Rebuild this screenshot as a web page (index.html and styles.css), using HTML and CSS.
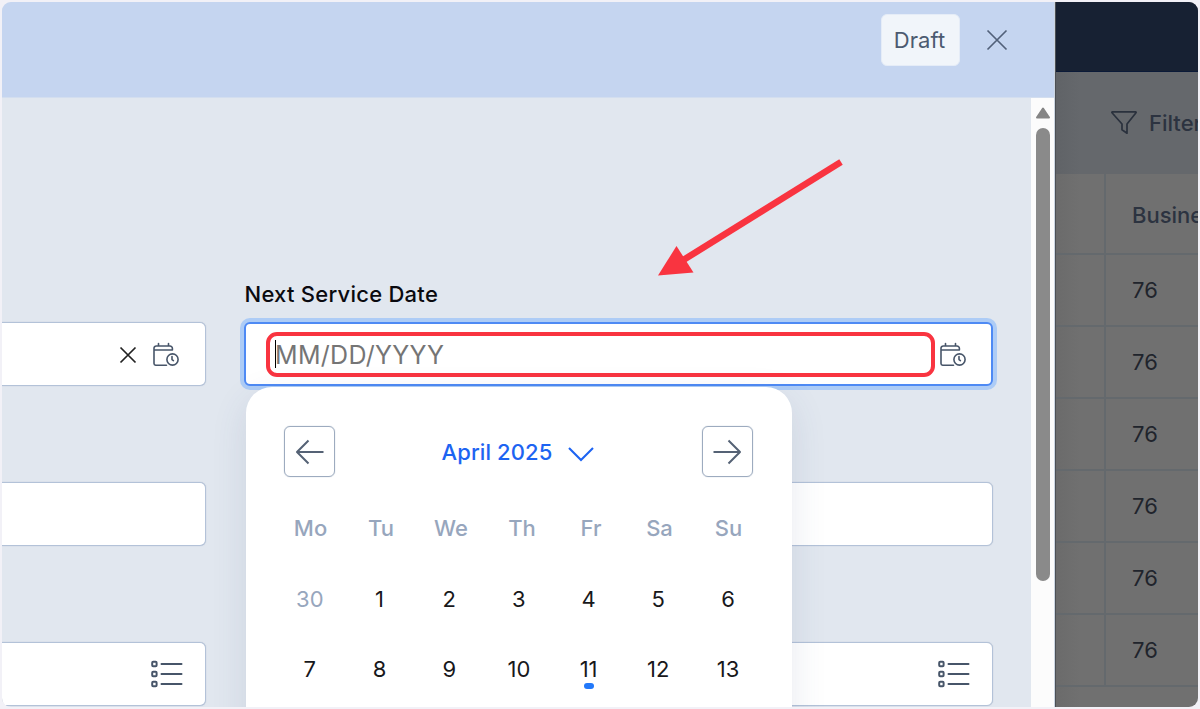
FILE: index.html
```html
<!DOCTYPE html>
<html lang="en">
<head>
<meta charset="utf-8">
<title>Next Service Date</title>
<link rel="stylesheet" href="styles.css">
</head>
<body>
<svg class="defs" width="0" height="0" aria-hidden="true">
  <symbol id="calendar-clock" viewBox="0 0 28 26">
    <g fill="none" stroke="#475569" stroke-width="1.6" stroke-linecap="round" stroke-linejoin="round">
      <path d="M14.5 23.2H3.600a1.600 1.600 0 0 1-1.600-1.600V6.2A2.2 2.2 0 0 1 4.2 4H18a2.4 2.4 0 0 1 2.4 2.4V8H2M6.500 1.500V4M16.500 1.500V4"/>
      <circle cx="20.500" cy="17.500" r="5.600"/>
      <path d="M20 14.500V17.600l1.400 1"/>
    </g>
  </symbol>
  <symbol id="list" viewBox="0 0 32 28">
    <g fill="none" stroke="#475569" stroke-width="2">
      <rect x="1.200" y="1.800" width="4.400" height="4.400" rx="1"/>
      <rect x="1.200" y="11.800" width="4.400" height="4.400" rx="1"/>
      <rect x="1.200" y="21.800" width="4.400" height="4.400" rx="1"/>
      <path stroke-linecap="round" d="M10.500 4H30.500M10.500 14H30.500M10.500 24H30.500"/>
    </g>
  </symbol>
</svg>
<div class="frame">
  <section class="drawer">
    <header class="drawer-head">
      <span class="draft">Draft</span>
      <svg class="close" width="22" height="22" viewBox="0 0 22 22"><path d="M1.500 1.500L20.500 20.500M20.500 1.500L1.500 20.500" fill="none" stroke="#52617a" stroke-width="1.700"/></svg>
    </header>
    <div class="drawer-body">
      <div class="form">
        <div class="col col-left">
          <div class="field date-field">
            <svg class="clear" width="18" height="18" viewBox="0 0 18 18"><path d="M1.500 1.500L16.500 16.500M16.500 1.500L1.500 16.500" fill="none" stroke="#222" stroke-width="1.700"/></svg>
            <svg class="cal-icon" width="28" height="26"><use href="#calendar-clock"/></svg>
          </div>
          <div class="field"></div>
          <div class="field list-field"><svg width="32" height="28"><use href="#list"/></svg></div>
        </div>
        <div class="col col-right">
          <label class="label">Next Service Date</label>
          <div class="field focused">
            <div class="highlight"><span class="caret"></span><span class="placeholder">MM/DD/YYYY</span></div>
            <svg class="cal-icon" width="28" height="26"><use href="#calendar-clock"/></svg>
          </div>
          <div class="field covered"></div>
          <div class="field covered list-field"><svg width="32" height="28"><use href="#list"/></svg></div>
          <div class="picker">
            <div class="picker-head">
              <span class="nav-btn"><svg width="30" height="26" viewBox="0 0 30 26"><path d="M28.500 13H2M13.500 1.500L2 13l11.500 11.500" fill="none" stroke="#556275" stroke-width="2" stroke-linejoin="round"/></svg></span>
              <span class="month">April 2025<svg width="28" height="16" viewBox="0 0 28 16"><path d="M2 2L14 14L26 2" fill="none" stroke="#1d64f2" stroke-width="2.100"/></svg></span>
              <span class="nav-btn"><svg width="30" height="26" viewBox="0 0 30 26"><path d="M1.500 13H28M16.500 1.500L28 13L16.500 24.500" fill="none" stroke="#556275" stroke-width="2" stroke-linejoin="round"/></svg></span>
            </div>
            <div class="weekdays"><span>Mo</span><span>Tu</span><span>We</span><span>Th</span><span>Fr</span><span>Sa</span><span>Su</span></div>
            <div class="days">
              <span class="muted">30</span><span>1</span><span>2</span><span>3</span><span>4</span><span>5</span><span>6</span>
              <span>7</span><span>8</span><span>9</span><span>10</span><span class="today">11</span><span>12</span><span>13</span>
            </div>
          </div>
        </div>
      </div>
      <div class="scrollbar">
        <svg width="16" height="12" viewBox="0 0 16 12"><path d="M8 1.500L14 10.500H2Z" fill="#858585" stroke="#858585" stroke-width="2" stroke-linejoin="round"/></svg>
        <div class="thumb"></div>
      </div>
    </div>
  </section>
  <aside class="backdrop">
    <div class="topbar"></div>
    <div class="toolbar">
      <svg width="28" height="26" viewBox="0 0 28 26"><path d="M2.500 1.800H25.500a.6.6 0 0 1 .5 1L17 14v9.200l-5-3.400V14L2 2.800a.6.6 0 0 1 .5-1Z" fill="none" stroke="#2a313d" stroke-width="1.700" stroke-linejoin="round"/></svg>
      <span>Filter</span>
    </div>
    <div class="table">
      <div class="row head"><span class="spacer"></span><span class="cell">Busine</span></div>
      <div class="row"><span class="spacer"></span><span class="cell">76</span></div>
      <div class="row"><span class="spacer"></span><span class="cell">76</span></div>
      <div class="row"><span class="spacer"></span><span class="cell">76</span></div>
      <div class="row"><span class="spacer"></span><span class="cell">76</span></div>
      <div class="row"><span class="spacer"></span><span class="cell">76</span></div>
      <div class="row"><span class="spacer"></span><span class="cell">76</span></div>
    </div>
  </aside>
  <svg class="arrow" width="190" height="122" viewBox="0 0 190 122"><path d="M185 6L22.500 107" fill="none" stroke="#f93440" stroke-width="6.600"/><path d="M2 119.500L20.500 90L37.500 116.500Z" fill="#f93440"/></svg>
</div>
</body>
</html>
```
FILE: styles.css
```css
* { box-sizing: border-box; }
body {
  margin: 0;
  width: 1200px;
  height: 709px;
  padding: 2px;
  overflow: hidden;
  background: #f2f1f7;
  font-family: Inter, "Liberation Sans", sans-serif;
  font-size: 22px;
  line-height: 28px;
}
svg { display: block; flex: none; }
.defs { position: absolute; }
.frame {
  position: relative;
  display: flex;
  width: 1196px;
  height: 705px;
  overflow: hidden;
  border-radius: 9px;
}
.drawer {
  display: flex;
  flex-direction: column;
  width: 1053px;
  flex: none;
  border-right: 1px solid #cbd5e1;
  background: #e1e7ef;
}
.drawer-head {
  display: flex;
  align-items: flex-start;
  justify-content: flex-end;
  height: 96px;
  flex: none;
  padding: 12px 46px 0 0;
  background: #c5d5f0;
  border-bottom: 1px solid #d3deef;
}
.draft {
  display: flex;
  align-items: center;
  justify-content: center;
  width: 79px;
  height: 52px;
  padding-right: 2px;
  border-radius: 6px;
  background: #f1f5fa;
  border: 1px solid #e5ecf7;
  color: #4b5a70;
  letter-spacing: .1px;
}
.close { margin: 15px 0 0 26px; }
.drawer-body { display: flex; flex: 1; min-height: 0; }
.form {
  display: flex;
  gap: 38px;
  flex: 1;
  height: 609px;
  padding-right: 38px;
}
.col { display: flex; flex-direction: column; gap: 96px; padding-top: 224px; }
.col-left { width: 204px; }
.col-right { position: relative; width: 749px; padding-top: 182px; }
.label {
  height: 28px;
  margin: 0 0 -82px .5px;
  color: #0a0a0f;
  font-weight: 500;
  letter-spacing: .25px;
}
.field {
  display: flex;
  align-items: center;
  height: 64px;
  flex: none;
  background: #fff;
  border: 1.500px solid #b3c2d8;
  border-radius: 6px;
  box-shadow: 0 0 1px rgba(148, 163, 184, .7);
}
.col-left .field {
  justify-content: flex-end;
  border-left: 0;
  border-radius: 0 6px 6px 0;
  padding-right: 25px;
}
.col-left .date-field { padding-top: 2px; }
.col-left .clear { margin-right: 15px; }
.col-left .list-field { padding-right: 22px; }
.list-field { justify-content: flex-end; padding-right: 22px; }
.covered { margin-left: 8px; }
.focused {
  border: 2px solid #4e8af4;
  box-shadow: 0 0 0 4px #adccf6;
  padding-left: 20px;
}
.focused .cal-icon { margin-top: 2px; }
.highlight {
  display: flex;
  align-items: center;
  width: 669px;
  height: 45px;
  margin-right: 4px;
  padding-left: 5px;
  border: 4px solid #f93440;
  border-radius: 11px;
  flex: none;
}
.caret { width: 1px; height: 28px; background: #000; }
.placeholder { margin-left: -1px; padding-top: 1px; color: #757575; font-size: 25px; letter-spacing: .3px; }
.picker {
  position: absolute;
  left: 2px;
  top: 289px;
  width: 546px;
  height: 400px;
  padding: 39px 29px 0;
  background: #fff;
  border-radius: 26px;
  box-shadow: 0 12px 36px rgba(60, 75, 120, .12);
}
.picker-head {
  display: flex;
  justify-content: space-between;
  align-items: center;
  padding: 0 10px 0 9px;
}
.nav-btn {
  display: flex;
  align-items: center;
  justify-content: center;
  width: 51px;
  height: 51px;
  border: 1.500px solid #9dabbf;
  border-radius: 6px;
  box-shadow: 0 0 1px #9dabbf;
}
.month { display: flex; align-items: center; gap: 15px; color: #1d64f2; font-weight: 500; letter-spacing: .1px; }
.month svg { margin-top: 4px; }
.weekdays {
  display: grid;
  grid-template-columns: 71px 70px 70px 72px 66px 71px 67px;
  margin-top: 37px;
  color: #97a6bd;
  font-weight: 500;
  text-align: center;
}
.days {
  display: grid;
  grid-template-columns: repeat(7, 69.700px);
  grid-auto-rows: 70px;
  margin-top: 22px;
  color: #18181b;
  text-align: center;
  line-height: 70px;
}
.muted { color: #97a6bd; }
.today { position: relative; }
.today::after {
  content: "";
  position: absolute;
  left: 30px;
  top: 49px;
  width: 10px;
  height: 6px;
  border-radius: 3px;
  background: #2379fa;
}
.scrollbar {
  display: flex;
  flex-direction: column;
  align-items: center;
  width: 23px;
  padding-top: 9px;
  background: #fcfcfc;
}
.thumb { width: 14px; height: 453px; margin-top: 9px; border-radius: 7px; background: #8a8a8a; }
.backdrop {
  flex: 1;
  min-width: 0;
  overflow: hidden;
  border-left: 1px solid #4c4f54;
  background: linear-gradient(90deg, #6b6b6b, #707070 24px);
  color: #2c3340;
}
.topbar { height: 70px; background: #172133; border-bottom: 1px solid #0b1a38; }
.toolbar {
  display: flex;
  align-items: center;
  gap: 11px;
  height: 102px;
  padding-left: 54px;
  background: linear-gradient(90deg, #606367, #65686c 24px);
  font-weight: 500;
}
.row { display: flex; height: 72px; border-bottom: 2px solid #64696d; }
.row.head { height: 81px; font-weight: 500; }
.spacer { width: 50px; flex: none; border-right: 2px solid #64696d; }
.cell { display: flex; align-items: center; padding: 2px 0 0 26px; }
.row:not(.head) .cell { padding-top: 0; color: #20242c; letter-spacing: .2px; }
.arrow { position: absolute; left: 654px; top: 154px; }
```
